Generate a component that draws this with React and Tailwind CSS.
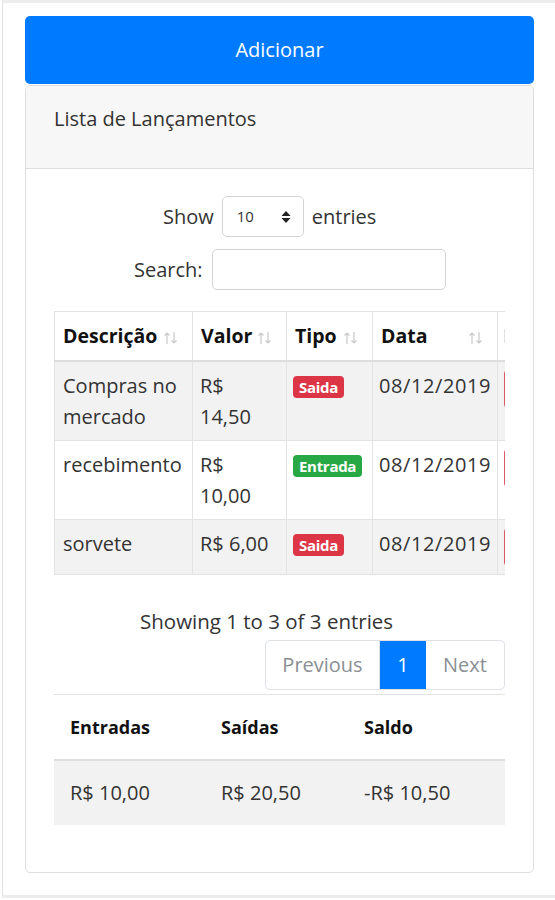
import React from "react";

const rows = [
  { desc: ["Compras no", "mercado"], valor: ["R$", "14,50"], tipo: "Saida", data: "08/12/2019", striped: true },
  { desc: ["recebimento"], valor: ["R$", "10,00"], tipo: "Entrada", data: "08/12/2019", striped: false },
  { desc: ["sorvete"], valor: ["R$ 6,00"], tipo: "Saida", data: "08/12/2019", striped: true },
];

function SortIcon() {
  return (
    <svg width="15" height="14" viewBox="0 0 15 14" className="absolute right-[14px] top-[19px]">
      <path d="M4 2v11M1.5 4.5L4 2l2.5 2.5" stroke="#c9c9c9" strokeWidth="1.2" fill="none" />
      <path d="M11 1v11M8.5 9.5L11 12l2.5-2.5" stroke="#c9c9c9" strokeWidth="1.2" fill="none" />
    </svg>
  );
}

function Badge({ tipo }) {
  const cls = tipo === "Entrada" ? "bg-[#28a745]" : "bg-[#dc3545]";
  return (
    <span className={`${cls} block w-fit rounded-[4px] px-[6px] text-[15px] leading-[22px] font-bold text-white tracking-[-0.3px]`}>
      {tipo}
    </span>
  );
}

export default function App() {
  return (
    <div className="w-[555px] h-[900px] bg-white text-[#333] font-['Open_Sans','Noto_Sans',sans-serif]">
      <div className="ml-[2px] h-[898px] border-l border-[#e2e2e2] border-t-[3px] border-t-[#ededed] border-b-[3px] border-b-[#ececec] pt-[13px] pl-[22px] pr-[21px]">
        <button className="w-full h-[68px] bg-[#007bff] rounded-[5px] text-white text-[20px]">
          Adicionar
        </button>
        <div className="mt-[1px] h-[788px] border border-[#dedede] rounded-[5px] overflow-hidden">
          <div className="h-[83px] bg-[#f7f7f7] border-b border-[#dedede] pl-[28px] pt-[17px] text-[20px] leading-[32px]">
            Lista de Lançamentos
          </div>
          <div className="px-[28px] pt-[27px] text-[20px]">
            <div className="flex items-center pl-[109px] gap-[8px]">
              <span>Show</span>
              <div className="w-[82px] h-[41px] border border-[#d4d4d4] rounded-[5px] flex items-center justify-between pl-[14px] pr-[12px] text-[15px]">
                <span>10</span>
                <svg width="10" height="14" viewBox="0 0 10 14">
                  <path d="M5 1L9.5 6H0.5Z" fill="#222" />
                  <path d="M5 13L9.5 8H0.5Z" fill="#222" />
                </svg>
              </div>
              <span>entries</span>
            </div>
            <div className="flex items-center pl-[80px] gap-[9px] mt-[12px]">
              <span>Search:</span>
              <div className="w-[234px] h-[41px] border border-[#d4d4d4] rounded-[5px]" />
            </div>

            <div className="mt-[21px] w-[451px] overflow-hidden">
              <table className="border-collapse text-[20px] leading-[31px] table-fixed w-[560px]">
                <colgroup>
                  <col className="w-[138px]" />
                  <col className="w-[94px]" />
                  <col className="w-[86px]" />
                  <col className="w-[125px]" />
                  <col className="w-[117px]" />
                </colgroup>
                <thead>
                  <tr className="border-t border-[#e3e3e3] border-b-2 border-b-[#dedede]">
                    {["Descrição", "Valor", "Tipo", "Data"].map((h, i) => (
                      <th key={h} className={`relative text-left font-bold text-[19.5px] leading-[32px] text-[#111] px-[8px] py-[8px] border-r border-[#e3e3e3] ${i === 0 ? "border-l" : ""}`}>
                        {h}
                        <SortIcon />
                      </th>
                    ))}
                    <th className="px-[6px] py-[8px]">
                      <span className="block w-[1px] h-[14px] bg-[#e0e0e0]" />
                    </th>
                  </tr>
                </thead>
                <tbody>
                  {rows.map((r, i) => (
                    <tr key={i} className={`${r.striped ? "bg-[#f2f2f2]" : "bg-white"} border-b border-[#e3e3e3] align-top`}>
                      <td className="px-[8px] py-[8px] border-l border-r border-[#e3e3e3] whitespace-nowrap">
                        {r.desc.map((t) => (
                          <div key={t}>{t}</div>
                        ))}
                      </td>
                      <td className="px-[7px] py-[8px] border-r border-[#e3e3e3] whitespace-nowrap">
                        {r.valor.map((t) => (
                          <div key={t}>{t}</div>
                        ))}
                      </td>
                      <td className="px-[6px] py-[8px] border-r border-[#e3e3e3]">
                        <div className="pt-[6px]">
                          <Badge tipo={r.tipo} />
                        </div>
                      </td>
                      <td className="px-[6px] py-[8px] border-r border-[#e3e3e3] tracking-[0.6px]">{r.data}</td>
                      <td className="px-[6px] py-[8px]">
                        <div className="w-[60px] h-[38px] border-2 border-[#dc5a66] rounded-[4px]" />
                      </td>
                    </tr>
                  ))}
                </tbody>
              </table>
            </div>

            <div className="mt-[30px] pl-[86px] text-[20.5px] leading-[32px]">Showing 1 to 3 of 3 entries</div>
            <div className="flex justify-end mt-[3px] w-[451px]">
              <div className="flex h-[50px] border border-[#dee2e6] rounded-[5px] overflow-hidden text-[20px]">
                <div className="w-[114px] flex items-center justify-center text-[#8a8f94] border-r border-[#dee2e6]">Previous</div>
                <div className="w-[46px] flex items-center justify-center bg-[#007bff] text-white">1</div>
                <div className="w-[78px] flex items-center justify-center text-[#8a8f94]">Next</div>
              </div>
            </div>

            <table className="mt-[4px] w-[451px] table-fixed border-collapse text-[20px] leading-[32px]">
              <colgroup>
                <col className="w-[151px]" />
                <col className="w-[143px]" />
                <col />
              </colgroup>
              <thead>
                <tr className="border-t border-[#e3e3e3] border-b-2 border-b-[#dedede]">
                  <th className="text-left font-bold text-[18px] text-[#111] pl-[16px] py-[16px]">Entradas</th>
                  <th className="text-left font-bold text-[18px] text-[#111] pl-[16px] py-[16px]">Saídas</th>
                  <th className="text-left font-bold text-[18px] text-[#111] pl-[16px] py-[16px]">Saldo</th>
                </tr>
              </thead>
              <tbody>
                <tr className="bg-[#f2f2f2]">
                  <td className="pl-[16px] py-[16px]">R$ 10,00</td>
                  <td className="pl-[16px] py-[16px]">R$ 20,50</td>
                  <td className="pl-[16px] py-[16px]">-R$ 10,50</td>
                </tr>
              </tbody>
            </table>
          </div>
        </div>
      </div>
    </div>
  );
}
